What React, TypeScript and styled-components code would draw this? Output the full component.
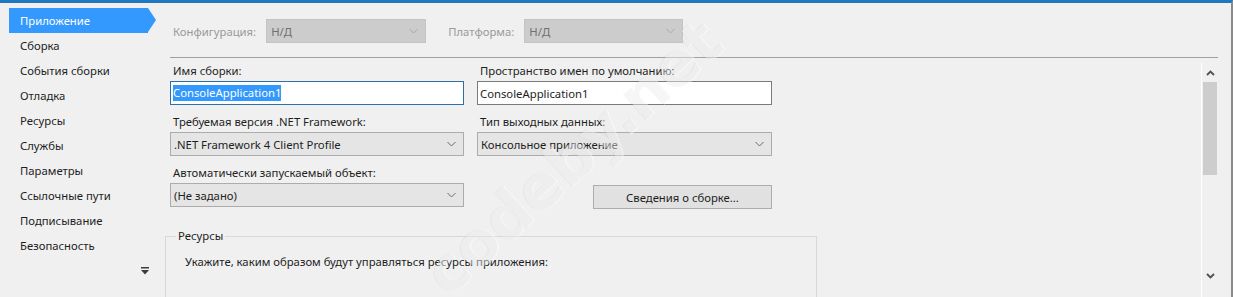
import React from "react";
import styled, { createGlobalStyle } from "styled-components";

const Global = createGlobalStyle`
  html, body { margin: 0; padding: 0; background: #f0f0f0; }
  body { font-family: "Noto Sans", "Open Sans", sans-serif; font-size: 11.3px; color: #1e1e1e; }
  * { box-sizing: border-box; }
`;

const Window = styled.div`
  position: relative;
  width: 1233px;
  height: 297px;
  overflow: hidden;
  display: flex;
  border-top: 3px solid #1f77c0;
  border-right: 2px solid #8a8a8a;
  background: #f0f0f0;
`;

const Sidebar = styled.nav`
  width: 165px;
  flex: none;
  padding: 5px 0 0 9px;
  display: flex;
  flex-direction: column;
`;

const NavItem = styled.div<{ $active?: boolean }>`
  position: relative;
  width: 139px;
  height: 25px;
  line-height: 25px;
  padding-left: 11px;
  white-space: nowrap;
  color: ${(p) => (p.$active ? "#ffffff" : "#1e1e1e")};
  background: ${(p) => (p.$active ? "#3399ff" : "transparent")};
  &::after {
    content: "";
    display: ${(p) => (p.$active ? "block" : "none")};
    position: absolute;
    right: -8px;
    top: 0;
    border-top: 12.5px solid transparent;
    border-bottom: 12.5px solid transparent;
    border-left: 8px solid #3399ff;
  }
`;

const MoreIcon = styled.div`
  margin: 9px 0 0 132px;
  width: 8px;
  height: 8px;
  display: flex;
`;

const Main = styled.div`
  flex: 1;
  display: flex;
  flex-direction: column;
  min-width: 0;
`;

const ConfigRow = styled.div`
  display: flex;
  align-items: center;
  margin: 16px 0 0 8px;
  height: 24px;
`;

const ConfigLabel = styled.span<{ $gap: number }>`
  color: #9a9a9a;
  margin-right: ${(p) => p.$gap}px;
  white-space: nowrap;
`;

const DisabledSelect = styled.div<{ $w: number; $mr?: number }>`
  width: ${(p) => p.$w}px;
  height: 24px;
  margin-right: ${(p) => p.$mr ?? 0}px;
  background: #cccccc;
  border: 1px solid #c4c4c4;
  color: #6f6f6f;
  display: flex;
  align-items: center;
  justify-content: space-between;
  padding: 0 7px 0 4px;
`;

const Separator = styled.div`
  height: 1px;
  background: #a0a0a0;
  margin: 14px 13px 0 5px;
`;

const Body = styled.div`
  flex: 1;
  display: flex;
  min-height: 0;
`;

const Pane = styled.div`
  flex: 1;
  padding-top: 5px;
  display: flex;
  flex-direction: column;
`;

const FormGrid = styled.div`
  margin-left: 5px;
  display: grid;
  grid-template-columns: 294px 295px;
  column-gap: 13px;
  row-gap: 9px;
`;

const Field = styled.div`
  display: flex;
  flex-direction: column;
`;

const Label = styled.div`
  height: 16px;
  line-height: 16px;
  padding-left: 3px;
  margin-bottom: 2px;
  white-space: nowrap;
`;

const TextBox = styled.div<{ $focused?: boolean }>`
  height: 24px;
  background: #ffffff;
  border: 1px solid ${(p) => (p.$focused ? "#2f6fa6" : "#7a7a7a")};
  display: flex;
  align-items: center;
  padding-left: 2px;
  white-space: nowrap;
`;

const Selection = styled.span`
  background: #3399ff;
  color: #ffffff;
  line-height: 16px;
`;

const Select = styled.div`
  height: 24px;
  background: #e5e5e5;
  border: 1px solid #acacac;
  display: flex;
  align-items: center;
  justify-content: space-between;
  padding: 0 7px 0 3px;
  white-space: nowrap;
`;

const ButtonCell = styled.div`
  display: flex;
  justify-content: flex-end;
  align-items: flex-end;
`;

const Button = styled.div`
  width: 179px;
  height: 24px;
  margin-bottom: -2px;
  background: #e1e1e1;
  border: 1px solid #adadad;
  display: flex;
  align-items: center;
  justify-content: center;
`;

const Group = styled.fieldset`
  margin: 21px 0 0 0;
  width: 652px;
  height: 120px;
  flex: none;
  padding: 0;
  border: 1px solid #d8d8d8;
`;

const Legend = styled.legend`
  margin-left: 10px;
  padding: 0 2px;
  line-height: 16px;
`;

const GroupText = styled.div`
  margin: 10px 0 0 19px;
  line-height: 16px;
`;

const ScrollBar = styled.div`
  width: 17px;
  margin: 5px 13px 0 0;
  border-left: 1px solid #ffffff;
  display: flex;
  flex-direction: column;
  align-items: center;
`;

const ScrollArrow = styled.div`
  height: 19px;
  display: flex;
  align-items: center;
  justify-content: center;
`;

const Thumb = styled.div`
  width: 14px;
  height: 93px;
  background: #cdcdcd;
`;

const Track = styled.div<{ $h?: number }>`
  flex: ${(p) => (p.$h ? "none" : "1")};
  height: ${(p) => (p.$h ? `${p.$h}px` : "auto")};
`;

const Watermark = styled.div`
  position: absolute;
  left: 385px;
  top: 118px;
  font-family: "DejaVu Sans", sans-serif;
  font-weight: bold;
  font-size: 62px;
  color: rgba(0, 0, 0, 0.035);
  text-shadow: 1px 1px 0 rgba(255, 255, 255, 0.45);
  transform: rotate(-42deg);
  transform-origin: center;
  white-space: nowrap;
  pointer-events: none;
  letter-spacing: -1px;
`;

const Chevron = ({ color = "#6a6a6a" }: { color?: string }) => (
  <svg width="9" height="6" viewBox="0 0 9 6">
    <polyline points="0.5,1 4.5,5 8.5,1" fill="none" stroke={color} strokeWidth="1" />
  </svg>
);

const ScrollChevron = ({ up }: { up?: boolean }) => (
  <svg width="9" height="6" viewBox="0 0 9 6">
    <polyline
      points={up ? "1,5 4.5,1.5 8,5" : "1,1 4.5,4.5 8,1"}
      fill="none"
      stroke="#505050"
      strokeWidth="1.8"
    />
  </svg>
);

const navItems = [
  "Приложение",
  "Сборка",
  "События сборки",
  "Отладка",
  "Ресурсы",
  "Службы",
  "Параметры",
  "Ссылочные пути",
  "Подписывание",
  "Безопасность",
];

export default function App() {
  return (
    <>
      <Global />
      <Window>
        <Sidebar>
          {navItems.map((n, i) => (
            <NavItem key={n} $active={i === 0}>
              {n}
            </NavItem>
          ))}
          <MoreIcon>
            <svg width="8" height="8" viewBox="0 0 8 8">
              <rect x="0" y="0" width="8" height="1.5" fill="#3c3c3c" />
              <polygon points="0,3 8,3 4,7.5" fill="#3c3c3c" />
            </svg>
          </MoreIcon>
        </Sidebar>
        <Main>
          <ConfigRow>
            <ConfigLabel $gap={10}>Конфигурация:</ConfigLabel>
            <DisabledSelect $w={160} $mr={22}>
              <span>Н/Д</span>
              <Chevron color="#a8a8a8" />
            </DisabledSelect>
            <ConfigLabel $gap={10}>Платформа:</ConfigLabel>
            <DisabledSelect $w={159}>
              <span>Н/Д</span>
              <Chevron color="#a8a8a8" />
            </DisabledSelect>
          </ConfigRow>
          <Separator />
          <Body>
            <Pane>
              <FormGrid>
                <Field>
                  <Label>Имя сборки:</Label>
                  <TextBox $focused>
                    <Selection>ConsoleApplication1</Selection>
                  </TextBox>
                </Field>
                <Field>
                  <Label>Пространство имен по умолчанию:</Label>
                  <TextBox>ConsoleApplication1</TextBox>
                </Field>
                <Field>
                  <Label>Требуемая версия .NET Framework:</Label>
                  <Select>
                    <span>.NET Framework 4 Client Profile</span>
                    <Chevron />
                  </Select>
                </Field>
                <Field>
                  <Label>Тип выходных данных:</Label>
                  <Select>
                    <span>Консольное приложение</span>
                    <Chevron />
                  </Select>
                </Field>
                <Field>
                  <Label>Автоматически запускаемый объект:</Label>
                  <Select>
                    <span>(Не задано)</span>
                    <Chevron />
                  </Select>
                </Field>
                <ButtonCell>
                  <Button>Сведения о сборке...</Button>
                </ButtonCell>
              </FormGrid>
              <Group>
                <Legend>Ресурсы</Legend>
                <GroupText>Укажите, каким образом будут управляться ресурсы приложения:</GroupText>
              </Group>
            </Pane>
            <ScrollBar>
              <ScrollArrow>
                <ScrollChevron up />
              </ScrollArrow>
              <Thumb />
              <Track />
              <ScrollArrow>
                <ScrollChevron />
              </ScrollArrow>
              <Track $h={12} />
            </ScrollBar>
          </Body>
        </Main>
        <Watermark>codeby.net</Watermark>
      </Window>
    </>
  );
}
